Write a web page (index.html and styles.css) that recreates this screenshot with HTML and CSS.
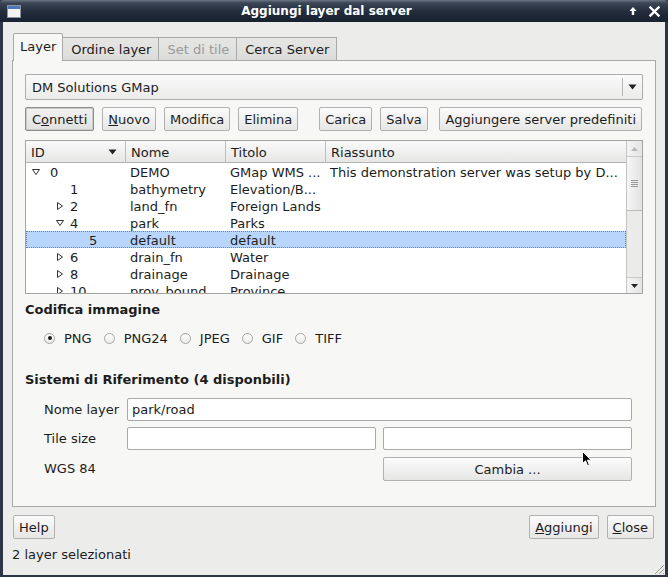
FILE: index.html
```html
<!DOCTYPE html>
<html>
<head>
<meta charset="utf-8">
<link rel="stylesheet" href="styles.css">
</head>
<body>
<div class="window">
  <div class="titlebar">
    <span class="winicon"><span class="winicon-bar"></span></span>
    <span class="title">Aggiungi layer dal server</span>
    <span class="tb-btns">
      <svg width="10" height="10" viewBox="0 0 10 10"><path d="M5 1 L1.5 5 H3.8 V9 H6.2 V5 H8.5 Z" fill="#fff"/></svg>
      <svg width="11" height="11" viewBox="0 0 11 11"><path d="M1.5 1.5 L9.5 9.5 M9.5 1.5 L1.5 9.5" stroke="#fff" stroke-width="2.4" stroke-linecap="square"/></svg>
    </span>
  </div>
  <div class="body">
    <div class="tabbar">
      <div class="tab active">Layer</div>
      <div class="tab">Ordine layer</div>
      <div class="tab disabled">Set di tile</div>
      <div class="tab">Cerca Server</div>
    </div>
    <div class="panel">
      <div class="combo">
        <span class="combo-text">DM Solutions GMap</span>
        <span class="combo-btn"><svg width="9" height="6" viewBox="0 0 9 6"><path d="M0.5 0.5 H8.5 L4.5 5.5 Z" fill="#222"/></svg></span>
      </div>
      <div class="btnrow">
        <button class="btn default">C<u>o</u>nnetti</button>
        <button class="btn"><u>N</u>uovo</button>
        <button class="btn">Modifica</button>
        <button class="btn">Elimina</button>
        <button class="btn btn-carica">Carica</button>
        <button class="btn">Salva</button>
        <button class="btn btn-right">Aggiungere server predefiniti</button>
      </div>
      <div class="tree">
        <div class="tree-main">
          <div class="thead">
            <div class="th c1">ID<svg class="sort" width="9" height="6" viewBox="0 0 9 6"><path d="M0.5 0.5 H8.5 L4.5 5.5 Z" fill="#222"/></svg></div>
            <div class="th c2">Nome</div>
            <div class="th c3">Titolo</div>
            <div class="th c4">Riassunto</div>
          </div>
          <div class="tbody">
            <div class="row">
              <div class="td c1"><span class="ind l0"><svg class="exp" width="8" height="8" viewBox="0 0 8 8"><path d="M0.5 1.5 H7.5 L4 6.5 Z" fill="none" stroke="#333"/></svg></span>0</div>
              <div class="td c2">DEMO</div><div class="td c3">GMap WMS ...</div><div class="td c4">This demonstration server was setup by D...</div>
            </div>
            <div class="row">
              <div class="td c1"><span class="ind l1"></span>1</div>
              <div class="td c2">bathymetry</div><div class="td c3">Elevation/B...</div><div class="td c4"></div>
            </div>
            <div class="row">
              <div class="td c1"><span class="ind l1"><svg class="exp" width="8" height="8" viewBox="0 0 8 8"><path d="M1.5 0.5 V7.5 L6.5 4 Z" fill="none" stroke="#333"/></svg></span>2</div>
              <div class="td c2">land_fn</div><div class="td c3">Foreign Lands</div><div class="td c4"></div>
            </div>
            <div class="row">
              <div class="td c1"><span class="ind l1"><svg class="exp" width="8" height="8" viewBox="0 0 8 8"><path d="M0.5 1.5 H7.5 L4 6.5 Z" fill="none" stroke="#333"/></svg></span>4</div>
              <div class="td c2">park</div><div class="td c3">Parks</div><div class="td c4"></div>
            </div>
            <div class="row selected">
              <div class="td c1"><span class="ind l2"></span>5</div>
              <div class="td c2">default</div><div class="td c3">default</div><div class="td c4"></div>
            </div>
            <div class="row">
              <div class="td c1"><span class="ind l1"><svg class="exp" width="8" height="8" viewBox="0 0 8 8"><path d="M1.5 0.5 V7.5 L6.5 4 Z" fill="none" stroke="#333"/></svg></span>6</div>
              <div class="td c2">drain_fn</div><div class="td c3">Water</div><div class="td c4"></div>
            </div>
            <div class="row">
              <div class="td c1"><span class="ind l1"><svg class="exp" width="8" height="8" viewBox="0 0 8 8"><path d="M1.5 0.5 V7.5 L6.5 4 Z" fill="none" stroke="#333"/></svg></span>8</div>
              <div class="td c2">drainage</div><div class="td c3">Drainage</div><div class="td c4"></div>
            </div>
            <div class="row">
              <div class="td c1"><span class="ind l1"><svg class="exp" width="8" height="8" viewBox="0 0 8 8"><path d="M1.5 0.5 V7.5 L6.5 4 Z" fill="none" stroke="#333"/></svg></span>10</div>
              <div class="td c2">prov_bound</div><div class="td c3">Province</div><div class="td c4"></div>
            </div>
          </div>
        </div>
        <div class="vscroll">
          <div class="sb-btn"><svg width="7" height="4" viewBox="0 0 7 4"><path d="M0 4 H7 L3.5 0 Z" fill="#b8b8b8"/></svg></div>
          <div class="sb-thumb"><span class="grip"></span></div>
          <div class="sb-track"></div>
          <div class="sb-btn"><svg width="7" height="4" viewBox="0 0 7 4"><path d="M0 0 H7 L3.5 4 Z" fill="#222"/></svg></div>
        </div>
      </div>
      <div class="section s1">Codifica immagine</div>
      <div class="radios">
        <span class="radio checked"></span><span class="rlabel">PNG</span>
        <span class="radio"></span><span class="rlabel">PNG24</span>
        <span class="radio"></span><span class="rlabel">JPEG</span>
        <span class="radio"></span><span class="rlabel">GIF</span>
        <span class="radio"></span><span class="rlabel">TIFF</span>
      </div>
      <div class="section s2">Sistemi di Riferimento (4 disponbili)</div>
      <div class="form">
        <div class="flabel">Nome layer</div>
        <div class="input span2">park/road</div>
        <div class="flabel">Tile size</div>
        <div class="input"></div>
        <div class="input"></div>
        <div class="flabel">WGS 84</div>
        <div></div>
        <button class="btn cambia">Cambia ...</button>
      </div>
    </div>
    <div class="footer">
      <button class="btn">Help</button>
      <span class="spacer"></span>
      <button class="btn"><u>A</u>ggiungi</button>
      <button class="btn"><u>C</u>lose</button>
    </div>
    <div class="status">2 layer selezionati</div>
  </div>
  <svg class="grip-corner" width="12" height="12" viewBox="0 0 12 12"><path d="M11 2 L2 11 M11 6 L6 11 M11 10 L10 11" stroke="#9a9a9a" stroke-width="1"/></svg>
  <svg class="cursor" width="10" height="16" viewBox="0 0 10 16"><path d="M0.5 0.5 V12.5 L3.5 9.8 L5.6 14.8 L7.4 14 L5.4 9.2 H9.2 Z" fill="#000" stroke="#fff" stroke-width="1"/></svg>
</div>
</body>
</html>
```
FILE: styles.css
```css
* { box-sizing: border-box; }
html, body { margin: 0; padding: 0; }
body {
  width: 668px;
  height: 577px;
  overflow: hidden;
  font-family: "DejaVu Sans", sans-serif;
  font-size: 13px;
  color: #1c1c1c;
  background: #2c3646;
}
.window {
  position: relative;
  width: 668px;
  height: 577px;
  background: #2c3646;
  padding: 0 3px 2px 3px;
  display: flex;
  flex-direction: column;
}
.titlebar {
  height: 22px;
  margin: 0 -3px;
  display: flex;
  align-items: center;
  padding: 0 8px 0 7px;
  background: linear-gradient(#6b7482 0px, #3a4555 3px, #222c3b 12px, #18212f 22px);
  border-radius: 4px 4px 0 0;
  color: #fff;
}
.winicon {
  width: 14px;
  height: 13px;
  background: #f4f4f4;
  border: 1px solid #8a94a2;
  display: flex;
  flex-direction: column;
}
.winicon-bar {
  height: 3px;
  background: #4a78b8;
}
.title {
  flex: 1;
  text-align: center;
  font-weight: bold;
  font-size: 12px;
  padding-left: 4px;
}
.tb-btns {
  display: flex;
  align-items: center;
  gap: 11px;
}
.body {
  flex: 1;
  background: #ececeb;
  padding: 11px 9px 0 9px;
  display: flex;
  flex-direction: column;
}
.tabbar {
  display: flex;
  align-items: flex-end;
  height: 27px;
  margin-left: 1px;
  position: relative;
  z-index: 2;
}
.tab {
  height: 23px;
  padding: 1px 7px 0 8px;
  display: flex;
  align-items: center;
  background: linear-gradient(#e6e6e5, #dcdcdb);
  border: 1px solid #a9a9a9;
  border-left: none;
  border-bottom: none;
  color: #1c1c1c;
}
.tab.active {
  height: 28px;
  margin-bottom: -1px;
  background: #f7f7f6;
  border-left: 1px solid #a9a9a9;
  border-radius: 2px 2px 0 0;
  padding: 0 6px 2px 6px;
}
.tab.disabled { color: #9a9a9a; }
.panel {
  height: 447px;
  background: #f7f7f6;
  border: 1px solid #a9a9a9;
  padding: 13px 12px 0 12px;
  display: flex;
  flex-direction: column;
}
.combo {
  height: 26px;
  border: 1px solid #acacac;
  border-radius: 2px;
  background: linear-gradient(#fafafa, #ebebea);
  display: flex;
  align-items: center;
}
.combo-text {
  flex: 1;
  padding-left: 6px;
}
.combo-btn {
  width: 20px;
  height: 18px;
  border-left: 1px solid #b8b8b8;
  display: flex;
  align-items: center;
  justify-content: center;
}
.btnrow {
  display: flex;
  gap: 8px;
  margin-top: 7px;
}
.btn {
  font-family: "DejaVu Sans", sans-serif;
  font-size: 13px;
  color: #1c1c1c;
  height: 24px;
  padding: 0 5px;
  border: 1px solid #b1b1b1;
  border-radius: 2px;
  background: linear-gradient(#fbfbfb, #e6e6e5);
  margin: 0;
}
.btn.default {
  border-color: #8d8d8d;
  box-shadow: inset 0 0 0 1px #c9c9c9;
  background: linear-gradient(#f2f2f2, #e0e0df);
  padding: 0 6px;
}
.btn-carica { margin-left: 13px; }
.btn-right { margin-left: auto; margin-right: 1px; }
.tree {
  margin-top: 9px;
  height: 154px;
  border: 1px solid #a4a4a4;
  background: #fff;
  display: flex;
  overflow: hidden;
}
.tree-main {
  flex: 1;
  overflow: hidden;
}
.thead {
  display: flex;
  height: 22px;
  border-bottom: 1px solid #b4b4b4;
  background: linear-gradient(#fafafa, #e6e6e5);
}
.th {
  display: flex;
  align-items: center;
  padding-left: 5px;
  padding-top: 1px;
  border-right: 1px solid #bdbdbd;
}
.th.c4 { border-right: none; }
.sort { margin-left: auto; margin-right: 8px; }
.c1 { width: 100px; }
.c2 { width: 100px; }
.c3 { width: 100px; }
.c4 { flex: 1; }
.row {
  display: flex;
  height: 17px;
  align-items: center;
}
.row.selected {
  background: #b8d6fb;
  outline: 1px dotted #6d7f99;
  outline-offset: -1px;
}
.td {
  white-space: nowrap;
  overflow: hidden;
  display: flex;
  align-items: center;
  height: 17px;
  padding-top: 1px;
}
.td.c2, .td.c3, .td.c4 { padding-left: 4px; }
.ind {
  display: inline-flex;
  align-items: center;
  height: 16px;
  flex: none;
}
.ind.l0 { width: 24px; padding-left: 6px; }
.ind.l1 { width: 44px; padding-left: 30px; }
.ind.l2 { width: 63px; }
.vscroll {
  width: 16px;
  border-left: 1px solid #c4c4c4;
  background: #ebebea;
  display: flex;
  flex-direction: column;
}
.sb-btn {
  height: 16px;
  display: flex;
  align-items: center;
  justify-content: center;
  background: linear-gradient(90deg, #f4f4f4, #e4e4e4);
  border-bottom: 1px solid #c8c8c8;
}
.sb-btn:last-child {
  border-bottom: none;
  border-top: 1px solid #c8c8c8;
}
.sb-thumb {
  height: 54px;
  background: linear-gradient(90deg, #f6f6f6, #e2e2e2);
  border-bottom: 1px solid #b9b9b9;
  display: flex;
  align-items: center;
  justify-content: center;
}
.grip {
  width: 7px;
  height: 8px;
  background: repeating-linear-gradient(#9a9a9a 0 1px, transparent 1px 2px);
}
.sb-track { flex: 1; }
.section {
  font-weight: bold;
  line-height: 15px;
}
.s1 { margin-top: 8px; }
.s2 { margin-top: 27px; }
.radios {
  display: flex;
  align-items: center;
  margin-top: 14px;
  padding-left: 19px;
  height: 14px;
}
.radio {
  width: 11px;
  height: 11px;
  border: 1px solid #a5a5a5;
  border-radius: 50%;
  background: linear-gradient(#ffffff, #ececec);
  display: flex;
  align-items: center;
  justify-content: center;
  margin-right: 9px;
}
.radio.checked::after {
  content: "";
  width: 4px;
  height: 4px;
  border-radius: 50%;
  background: #1c1c1c;
}
.rlabel { margin-right: 12px; }
.form {
  margin: 11px 11px 0 19px;
  display: grid;
  grid-template-columns: 76px 1fr 1fr;
  column-gap: 7px;
  row-gap: 6px;
  align-items: center;
}
.flabel { white-space: nowrap; }
.input {
  height: 23px;
  border: 1px solid #a9a9a9;
  border-radius: 2px;
  background: #fff;
  padding-left: 4px;
  display: flex;
  align-items: center;
}
.span2 { grid-column: 2 / 4; }
.cambia {
  margin-top: 1px;
  width: 100%;
}
.footer {
  display: flex;
  gap: 8px;
  margin-top: 8px;
  padding: 0 2px 0 1px;
}
.spacer { flex: 1; }
.status {
  margin-top: 8px;
  line-height: 15px;
}
.grip-corner {
  position: absolute;
  right: 3px;
  bottom: 2px;
}
.cursor {
  position: absolute;
  left: 582px;
  top: 451px;
}
```
